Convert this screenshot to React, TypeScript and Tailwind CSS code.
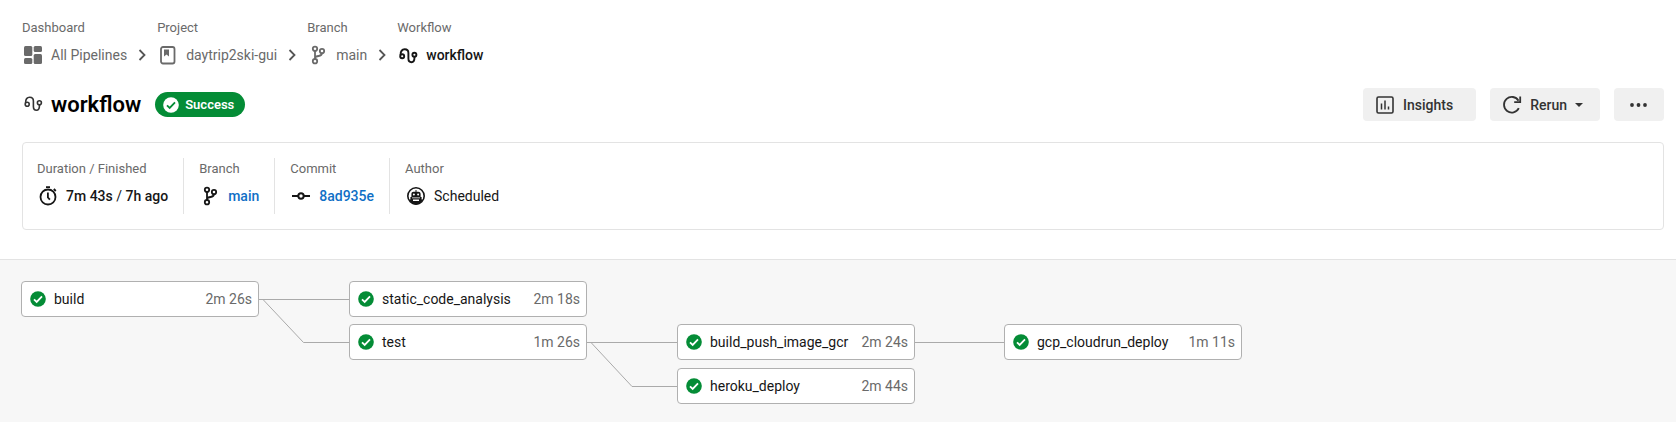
import type { ReactNode } from "react";

type IconProps = { className?: string };

function DashboardIcon({ className }: IconProps) {
  return (
    <svg viewBox="0 0 20 20" className={className} fill="currentColor" aria-hidden="true">
      <rect x="1" y="1" width="8.300" height="10" rx="1.500" />
      <rect x="1" y="13" width="8.300" height="6" rx="1.500" />
      <rect x="10.700" y="1" width="8.300" height="6" rx="1.500" />
      <rect x="10.700" y="9" width="8.300" height="10" rx="1.500" />
    </svg>
  );
}

function ProjectIcon({ className }: IconProps) {
  return (
    <svg viewBox="0 0 20 20" className={className} fill="none" aria-hidden="true">
      <rect x="3" y="2" width="13.500" height="16.500" rx="2" stroke="currentColor" strokeWidth="1.800" />
      <path d="M6 4.500h5v7l-2.500-2L6 11.500z" fill="currentColor" />
    </svg>
  );
}

function BranchIcon({ className }: IconProps) {
  return (
    <svg viewBox="0 0 20 20" className={className} fill="none" stroke="currentColor" strokeWidth="1.800" aria-hidden="true">
      <circle cx="7" cy="3.800" r="2.200" />
      <circle cx="7" cy="16.200" r="2.200" />
      <circle cx="14" cy="6" r="2.200" />
      <path d="M7 6v8M14 8.200c-.2 2.200-1.500 2.600-3.300 2.800-1.800.2-3.200.4-3.700 1.800" />
    </svg>
  );
}

function WorkflowIcon({ className, stroke = 1.9 }: IconProps & { stroke?: number }) {
  return (
    <svg viewBox="0 0 20 20" className={className} fill="none" stroke="currentColor" strokeWidth={stroke} aria-hidden="true">
      <circle cx="4.200" cy="11.200" r="2" />
      <circle cx="16.400" cy="9.800" r="2" />
      <path d="M2.600 9.900C2.600 6.500 4.300 4.300 6.700 4.300c2.300 0 3.700 1.500 3.700 3.700v5.600c0 2.200 1 3.700 3.100 3.700 2.200 0 3-1.500 3-5.300" />
    </svg>
  );
}

function ChevronIcon({ className }: IconProps) {
  return (
    <svg viewBox="0 0 20 20" className={className} fill="none" stroke="currentColor" strokeWidth="1.800" aria-hidden="true">
      <path d="M7.500 5l5 5-5 5" />
    </svg>
  );
}

function CheckIcon({ className, tick }: IconProps & { tick: string }) {
  return (
    <svg viewBox="0 0 16 16" className={className} aria-hidden="true">
      <circle cx="8" cy="8" r="7.800" fill="currentColor" />
      <path d="M4 8.300l2.700 2.600L12 5.300" fill="none" stroke={tick} strokeWidth="1.800" />
    </svg>
  );
}

function InsightsIcon({ className }: IconProps) {
  return (
    <svg viewBox="0 0 20 20" className={className} fill="none" stroke="currentColor" aria-hidden="true">
      <rect x="2" y="2" width="16" height="16" rx="1.500" strokeWidth="1.600" />
      <path d="M6.500 8.500v6M10 5.500v9M13.500 11.500v3" strokeWidth="1.500" />
    </svg>
  );
}

function RerunIcon({ className }: IconProps) {
  return (
    <svg viewBox="0 0 20 20" className={className} fill="none" stroke="currentColor" strokeWidth="1.800" aria-hidden="true">
      <path d="M16.800 13.200A7.800 7.800 0 1 1 16.500 5.700" />
      <path d="M18.200 1.500v5.700h-6" />
    </svg>
  );
}

function StopwatchIcon({ className }: IconProps) {
  return (
    <svg viewBox="0 0 20 20" className={className} fill="none" stroke="currentColor" strokeWidth="1.800" aria-hidden="true">
      <circle cx="10" cy="11" r="7.500" />
      <path d="M8 1.200h4M15.800 3l2 2M9.900 6.500v5l2 2.200" />
    </svg>
  );
}

function CommitIcon({ className }: IconProps) {
  return (
    <svg viewBox="0 0 20 20" className={className} fill="none" stroke="currentColor" strokeWidth="2" aria-hidden="true">
      <circle cx="10" cy="10" r="2.700" />
      <path d="M1 10h6M13 10h6" />
    </svg>
  );
}

function RobotIcon({ className }: IconProps) {
  return (
    <svg viewBox="0 0 20 20" className={className} aria-hidden="true">
      <circle cx="10" cy="10" r="8.200" fill="none" stroke="currentColor" strokeWidth="1.600" />
      <path d="M9.500 4h1v1.800h1.800c1.400 0 2.300.9 2.300 2.200v3h1v2.500h1.200c-1.200 3.200-3.600 5-6.800 5s-5.600-1.800-6.800-5h1.200V11h1V8c0-1.300.9-2.200 2.300-2.200h1.800z" fill="currentColor" />
      <circle cx="7.900" cy="8.600" r="1" fill="#fff" />
      <circle cx="12.100" cy="8.600" r="1" fill="#fff" />
      <path d="M6 11.500h8v.8H6zM7 13.500h6v1.400H7z" fill="#fff" />
    </svg>
  );
}

type Crumb = { label: string; text: string; icon: ReactNode; current?: boolean };

const crumbs: Crumb[] = [
  { label: "Dashboard", text: "All Pipelines", icon: <DashboardIcon className="size-5" /> },
  { label: "Project", text: "daytrip2ski-gui", icon: <ProjectIcon className="size-5" /> },
  { label: "Branch", text: "main", icon: <BranchIcon className="size-5" /> },
  { label: "Workflow", text: "workflow", icon: <WorkflowIcon className="size-5" />, current: true },
];

function Breadcrumbs() {
  return (
    <nav aria-label="Breadcrumb">
      <ol className="flex">
        {crumbs.map((c) => (
          <li key={c.label} className="flex flex-col gap-[7px]">
            <span className="text-[13px] leading-5 text-[#6a6a6a]">{c.label}</span>
            <span className="flex items-center">
              <a
                href="#"
                aria-current={c.current ? "page" : undefined}
                className={`flex items-center gap-2 pl-px text-sm leading-5 ${c.current ? "font-medium text-[#161616]" : "text-[#6a6a6a]"}`}
              >
                {c.icon}
                {c.text}
              </a>
              {!c.current && <ChevronIcon className="mx-[5px] size-5 text-[#555]" />}
            </span>
          </li>
        ))}
      </ol>
    </nav>
  );
}

function Detail({ label, icon, children }: { label: string; icon: ReactNode; children: ReactNode }) {
  return (
    <div className="flex flex-col gap-[7px] border-r border-[#e3e3e3] px-[15px] pb-2 pt-px first:pl-0 last:border-r-0">
      <dt className="text-[13px] leading-5 text-[#6a6a6a]">{label}</dt>
      <dd className="flex items-center gap-2 pl-px text-sm leading-5 text-[#161616]">
        {icon}
        {children}
      </dd>
    </div>
  );
}

type Job = { name: string; time: string; place: string };

const jobs: Job[] = [
  { name: "build", time: "2m 26s", place: "left-0 top-0" },
  { name: "static_code_analysis", time: "2m 18s", place: "left-[328px] top-0" },
  { name: "test", time: "1m 26s", place: "left-[328px] top-[43px]" },
  { name: "build_push_image_gcr", time: "2m 24s", place: "left-[656px] top-[43px]" },
  { name: "heroku_deploy", time: "2m 44s", place: "left-[656px] top-[87px]" },
  { name: "gcp_cloudrun_deploy", time: "1m 11s", place: "left-[983px] top-[43px]" },
];

function JobGraph() {
  return (
    <div className="relative h-[123px] w-[1221px]">
      <svg width="1221" height="123" viewBox="0 0 1221 123" className="absolute left-0 top-0" fill="none" stroke="#aaaaaa" aria-hidden="true">
        <path d="M238 18.500H328M242 18.500L282.500 61.500H328M566 61.500H656M570 61.500L611 105.500H656M893 61.500H984" />
      </svg>
      {jobs.map((job) => (
        <a
          key={job.name}
          href="#"
          className={`absolute flex h-9 w-[238px] items-center rounded border border-[#b0b0b0] bg-white pl-2 pr-1.5 text-sm leading-5 ${job.place}`}
        >
          <CheckIcon className="size-4 text-[#048c36]" tick="#fff" />
          <span className="ml-2 flex-1 whitespace-nowrap text-[#161616]">{job.name}</span>
          <span className="whitespace-nowrap text-[#6a6a6a]">{job.time}</span>
        </a>
      ))}
    </div>
  );
}

const buttonClass = "flex h-[33px] items-center rounded bg-[#f0f0f0] text-sm font-medium leading-5 text-[#333]";

export default function App() {
  return (
    <div className="flex min-h-screen flex-col bg-white font-[Roboto,sans-serif]">
      <header className="pb-[29px] pl-[22px] pr-3 pt-[18px]">
        <Breadcrumbs />
        <div className="mt-[23px] flex items-center">
          <WorkflowIcon className="mb-1 ml-px size-5 text-[#333]" stroke={1.6} />
          <h1 className="ml-2 text-[22px] font-semibold leading-8 text-black">workflow</h1>
          <span className="ml-3.5 flex h-[25px] items-center gap-1.5 rounded-full bg-[#048c36] pl-2 pr-[11px] text-[13px] font-semibold text-white">
            <CheckIcon className="size-4" tick="#048c36" />
            Success
          </span>
          <div className="ml-auto flex gap-3.5">
            <button type="button" className={`${buttonClass} gap-2 pl-3 pr-[23px]`}>
              <InsightsIcon className="size-5" />
              Insights
            </button>
            <button type="button" className={`${buttonClass} gap-2 pl-3 pr-[17px]`}>
              <RerunIcon className="size-5" />
              Rerun
              <svg viewBox="0 0 8 4" className="h-1 w-2" fill="currentColor" aria-hidden="true">
                <path d="M0 0h8L4 4z" />
              </svg>
            </button>
            <button type="button" aria-label="More actions" className={`${buttonClass} px-[15px]`}>
              <svg viewBox="0 0 20 20" className="size-5" fill="currentColor" aria-hidden="true">
                <circle cx="3" cy="10" r="1.900" />
                <circle cx="9.500" cy="10" r="1.900" />
                <circle cx="16" cy="10" r="1.900" />
              </svg>
            </button>
          </div>
        </div>
        <dl className="mt-[21px] flex rounded border border-[#e3e3e3] px-3.5 py-[15px]">
          <Detail label="Duration / Finished" icon={<StopwatchIcon className="size-5" />}>
            <span>
              <span className="font-medium">7m 43s</span> / <span className="font-medium">7h ago</span>
            </span>
          </Detail>
          <Detail label="Branch" icon={<BranchIcon className="size-5" />}>
            <a href="#" className="font-medium text-[#0f6fc6]">main</a>
          </Detail>
          <Detail label="Commit" icon={<CommitIcon className="size-5" />}>
            <a href="#" className="font-medium text-[#0f6fc6]">8ad935e</a>
          </Detail>
          <Detail label="Author" icon={<RobotIcon className="size-5" />}>
            Scheduled
          </Detail>
        </dl>
      </header>
      <main className="flex-1 border-t border-[#e3e3e3] bg-[#f7f7f7] pl-[21px] pt-[21px]">
        <JobGraph />
      </main>
    </div>
  );
}
